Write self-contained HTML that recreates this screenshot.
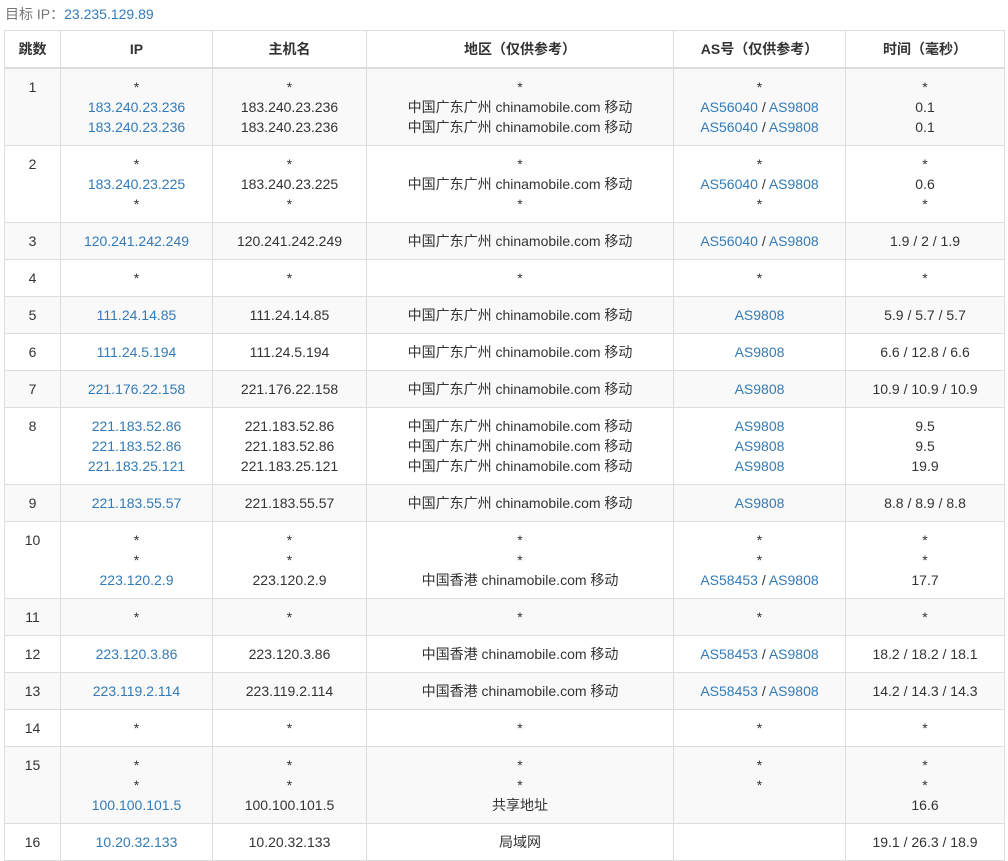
<!DOCTYPE html>
<html><head><meta charset="utf-8">
<style>
body{margin:0;background:#fff;font-family:"Liberation Sans","Noto Sans CJK SC",sans-serif;font-size:14px;color:#333;}
.t{position:absolute;left:5px;top:4px;line-height:20px;color:#777;}
a{color:#337ab7;text-decoration:none;}
table{position:absolute;left:4px;top:30px;width:1000px;border-collapse:collapse;table-layout:fixed;}
td,th{border:1px solid #ddd;padding:8px;line-height:20px;text-align:center;vertical-align:top;white-space:nowrap;overflow:hidden;}
th{font-weight:bold;border-bottom:2px solid #ddd;}
tbody tr:nth-child(odd) td{background:#f9f9f9;}
</style></head><body>
<div class="t">目标 IP：<a>23.235.129.89</a></div>
<table>
<colgroup><col style="width:56px"><col style="width:152px"><col style="width:154px"><col style="width:307px"><col style="width:172px"><col style="width:159px"></colgroup>
<thead><tr><th>跳数</th><th>IP</th><th>主机名</th><th>地区（仅供参考）</th><th>AS号（仅供参考）</th><th>时间（毫秒）</th></tr></thead>
<tbody>
<tr><td>1</td><td>*<br><a>183.240.23.236</a><br><a>183.240.23.236</a></td><td>*<br>183.240.23.236<br>183.240.23.236</td><td>*<br>中国广东广州 chinamobile.com 移动<br>中国广东广州 chinamobile.com 移动</td><td>*<br><a>AS56040</a> / <a>AS9808</a><br><a>AS56040</a> / <a>AS9808</a></td><td>*<br>0.1<br>0.1</td></tr>
<tr><td>2</td><td>*<br><a>183.240.23.225</a><br>*</td><td>*<br>183.240.23.225<br>*</td><td>*<br>中国广东广州 chinamobile.com 移动<br>*</td><td>*<br><a>AS56040</a> / <a>AS9808</a><br>*</td><td>*<br>0.6<br>*</td></tr>
<tr><td>3</td><td><a>120.241.242.249</a></td><td>120.241.242.249</td><td>中国广东广州 chinamobile.com 移动</td><td><a>AS56040</a> / <a>AS9808</a></td><td>1.9 / 2 / 1.9</td></tr>
<tr><td>4</td><td>*</td><td>*</td><td>*</td><td>*</td><td>*</td></tr>
<tr><td>5</td><td><a>111.24.14.85</a></td><td>111.24.14.85</td><td>中国广东广州 chinamobile.com 移动</td><td><a>AS9808</a></td><td>5.9 / 5.7 / 5.7</td></tr>
<tr><td>6</td><td><a>111.24.5.194</a></td><td>111.24.5.194</td><td>中国广东广州 chinamobile.com 移动</td><td><a>AS9808</a></td><td>6.6 / 12.8 / 6.6</td></tr>
<tr><td>7</td><td><a>221.176.22.158</a></td><td>221.176.22.158</td><td>中国广东广州 chinamobile.com 移动</td><td><a>AS9808</a></td><td>10.9 / 10.9 / 10.9</td></tr>
<tr><td>8</td><td><a>221.183.52.86</a><br><a>221.183.52.86</a><br><a>221.183.25.121</a></td><td>221.183.52.86<br>221.183.52.86<br>221.183.25.121</td><td>中国广东广州 chinamobile.com 移动<br>中国广东广州 chinamobile.com 移动<br>中国广东广州 chinamobile.com 移动</td><td><a>AS9808</a><br><a>AS9808</a><br><a>AS9808</a></td><td>9.5<br>9.5<br>19.9</td></tr>
<tr><td>9</td><td><a>221.183.55.57</a></td><td>221.183.55.57</td><td>中国广东广州 chinamobile.com 移动</td><td><a>AS9808</a></td><td>8.8 / 8.9 / 8.8</td></tr>
<tr><td>10</td><td>*<br>*<br><a>223.120.2.9</a></td><td>*<br>*<br>223.120.2.9</td><td>*<br>*<br>中国香港 chinamobile.com 移动</td><td>*<br>*<br><a>AS58453</a> / <a>AS9808</a></td><td>*<br>*<br>17.7</td></tr>
<tr><td>11</td><td>*</td><td>*</td><td>*</td><td>*</td><td>*</td></tr>
<tr><td>12</td><td><a>223.120.3.86</a></td><td>223.120.3.86</td><td>中国香港 chinamobile.com 移动</td><td><a>AS58453</a> / <a>AS9808</a></td><td>18.2 / 18.2 / 18.1</td></tr>
<tr><td>13</td><td><a>223.119.2.114</a></td><td>223.119.2.114</td><td>中国香港 chinamobile.com 移动</td><td><a>AS58453</a> / <a>AS9808</a></td><td>14.2 / 14.3 / 14.3</td></tr>
<tr><td>14</td><td>*</td><td>*</td><td>*</td><td>*</td><td>*</td></tr>
<tr><td>15</td><td>*<br>*<br><a>100.100.101.5</a></td><td>*<br>*<br>100.100.101.5</td><td>*<br>*<br>共享地址</td><td>*<br>*<br>&nbsp;</td><td>*<br>*<br>16.6</td></tr>
<tr><td>16</td><td><a>10.20.32.133</a></td><td>10.20.32.133</td><td>局域网</td><td>&nbsp;</td><td>19.1 / 26.3 / 18.9</td></tr>
</tbody></table>
</body></html>
